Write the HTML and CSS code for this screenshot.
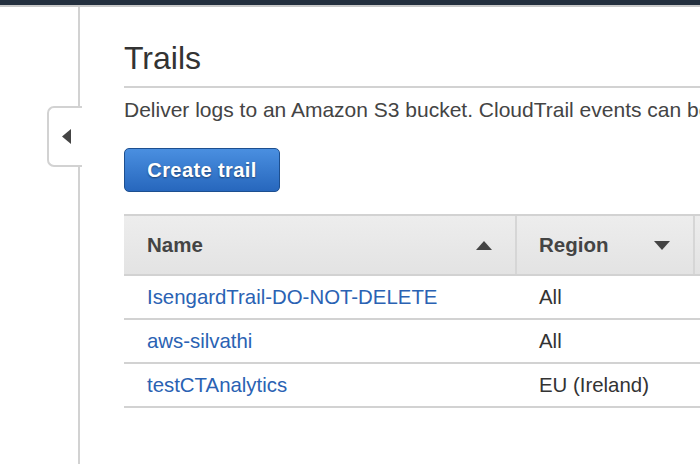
FILE: index.html
```html
<!DOCTYPE html>
<html>
<head>
<meta charset="utf-8">
<link rel="stylesheet" href="styles.css">
</head>
<body>
<div class="topbar"></div>
<div class="main">
  <aside class="sidebar">
    <div class="tab">
      <svg width="10" height="15" viewBox="0 0 10 15"><polygon points="9,0 9,15 0,7.5" fill="#444"/></svg>
    </div>
  </aside>
  <section class="content">
    <h1 class="title">Trails</h1>
    <p class="desc">Deliver logs to an Amazon S3 bucket. CloudTrail events can be delivered to CloudWatch Logs and Amazon CloudWatch Events.</p>
    <button class="btn">Create trail</button>
    <div class="table">
      <div class="row head">
        <div class="cell">Name <svg class="sort" width="16" height="9" viewBox="0 0 16 9"><polygon points="0,9 16,9 8,0" fill="#444"/></svg></div>
        <div class="cell sep">Region <svg class="sort" width="16" height="9" viewBox="0 0 16 9"><polygon points="0,0 16,0 8,9" fill="#444"/></svg></div>
        <div class="cell sep"></div>
      </div>
      <div class="row"><div class="cell"><a href="#">IsengardTrail-DO-NOT-DELETE</a></div><div class="cell">All</div><div class="cell"></div></div>
      <div class="row"><div class="cell"><a href="#">aws-silvathi</a></div><div class="cell">All</div><div class="cell"></div></div>
      <div class="row"><div class="cell"><a href="#">testCTAnalytics</a></div><div class="cell">EU (Ireland)</div><div class="cell"></div></div>
    </div>
  </section>
</div>
</body>
</html>
```

FILE: styles.css
```css
html, body {
  margin: 0;
  padding: 0;
  overflow: hidden;
  background: #fff;
  font-family: "Liberation Sans", Arial, sans-serif;
}
.topbar {
  height: 5px;
  background: #232f3e;
  border-bottom: 2px solid #c9c9c9;
}
.main {
  display: flex;
  height: 457px;
}
.sidebar {
  position: relative;
  width: 78px;
  flex: none;
  border-right: 2px solid #d2d2d2;
}
.tab {
  position: absolute;
  left: 47px;
  top: 99px;
  width: 33px;
  height: 57px;
  box-sizing: content-box;
  background: #fff;
  border: 2px solid #d2d2d2;
  border-right: none;
  border-radius: 7px 0 0 7px;
  display: flex;
  align-items: center;
}
.tab svg {
  margin-left: 13px;
}
.content {
  flex: 1;
  min-width: 0;
  padding: 32px 0 0 44px;
}
.title {
  margin: 0;
  font-size: 32px;
  line-height: 38px;
  font-weight: normal;
  color: #333;
  padding-bottom: 9px;
  border-bottom: 2px solid #d2d2d2;
}
.desc {
  margin: 10px 0 0;
  font-size: 21px;
  line-height: 24px;
  color: #444;
  white-space: nowrap;
}
.btn {
  display: block;
  margin-top: 26px;
  width: 156px;
  height: 44px;
  border: 1px solid #1d4f8f;
  border-radius: 5px;
  background: linear-gradient(#4a8fe0, #2767bd);
  color: #fff;
  font-family: "Liberation Sans", Arial, sans-serif;
  font-weight: bold;
  font-size: 20px;
  letter-spacing: 0.4px;
  text-shadow: 0 1px 2px rgba(0,0,0,0.45);
  padding: 0;
}
.table {
  margin-top: 22px;
  border-top: 2px solid #d2d2d2;
}
.row {
  display: grid;
  grid-template-columns: 391px 178px 1fr;
  border-bottom: 2px solid #d2d2d2;
  height: 42px;
  font-size: 20.4px;
  color: #333;
}
.row.head {
  height: 58px;
  background: linear-gradient(#ededed, #e3e3e3);
  font-weight: bold;
  font-size: 20.5px;
  color: #444;
}
.cell {
  display: flex;
  align-items: center;
  justify-content: space-between;
  padding: 0 23px;
  box-sizing: border-box;
  white-space: nowrap;
}
.head .cell.sep {
  border-left: 2px solid #d6d6d6;
}
.row .cell + .cell {
  padding-left: 24px;
}
.head .cell + .cell {
  padding-left: 22px;
}
.sort {
  flex: none;
}
a {
  color: #2a62b3;
  text-decoration: none;
}
```
